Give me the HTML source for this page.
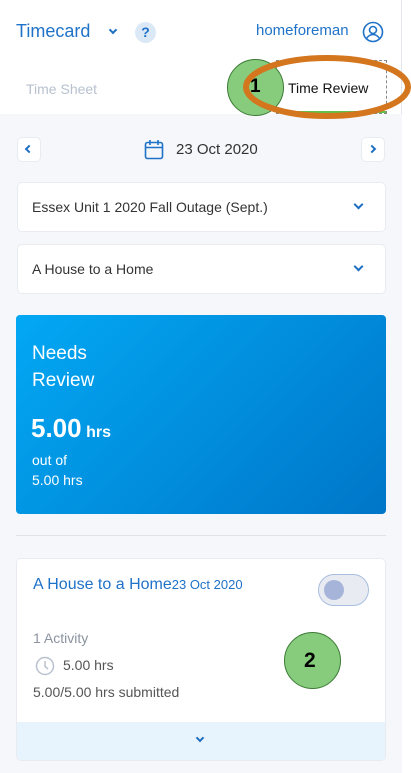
<!DOCTYPE html>
<html><head><style>
*{box-sizing:border-box;margin:0;padding:0}
body{width:411px;height:773px;overflow:hidden;background:#fff;font-family:"Liberation Sans",sans-serif;position:relative}
.abs{position:absolute}
.main{position:absolute;left:0;top:0;width:402px;height:773px;border-right:1px solid #e3e6ea}
.gray{position:absolute;left:0;top:114px;width:402px;height:659px;background:#f5f7fb}
.box{position:absolute;background:#fff;border:1px solid #e8ebf0;border-radius:5px}
.chev{position:absolute;width:7px;height:7px;border-right:2px solid #1d6fc4;border-bottom:2px solid #1d6fc4;transform:rotate(45deg)}
</style></head><body>
<div class="main"></div>
<div class="gray"></div>
<div class="abs" style="left:16px;top:21px;font-size:18px;color:#1f72c8">Timecard</div>
<div class="chev" style="left:110px;top:27px;width:6px;height:6px"></div>
<div class="abs" style="left:135px;top:22px;width:21px;height:21px;border-radius:50%;background:#dbe9f7;color:#1f72c8;font-size:14px;font-weight:bold;text-align:center;line-height:21px">?</div>
<div class="abs" style="left:256px;top:22px;font-size:15px;color:#1f72c8">homeforeman</div>
<svg class="abs" style="left:362px;top:21px" width="22" height="22" viewBox="0 0 22 22"><circle cx="11" cy="11" r="9.5" fill="none" stroke="#1f72c8" stroke-width="1.6"/><circle cx="11" cy="9" r="3.5" fill="none" stroke="#1f72c8" stroke-width="1.6"/><path d="M4.5 17.5c2-3 4-4 6.5-4s4.5 1 6.5 4" fill="none" stroke="#1f72c8" stroke-width="1.6"/></svg>
<div class="abs" style="left:26px;top:81px;font-size:14px;color:#b7c1cf">Time Sheet</div>
<div class="abs" style="left:276px;top:60px;width:111px;height:54px;border:1px dashed #888"></div>
<div class="abs" style="left:277px;top:111px;width:109px;height:2px;background:#5fc04a"></div>
<div class="abs" style="left:227px;top:59px;width:57px;height:57px;border-radius:50%;background:#86cc7c;border:1.5px solid #3c7a35"></div>
<div class="abs" style="left:250px;top:76px;font-size:19px;font-weight:bold;color:#000">1</div>
<svg class="abs" style="left:240px;top:52px" width="171" height="70"><ellipse cx="87" cy="35" rx="81" ry="29" fill="none" stroke="#d4761e" stroke-width="6"/></svg>
<div class="abs" style="left:288px;top:80px;font-size:14px;color:#111">Time Review</div>
<div class="box" style="left:17px;top:137px;width:24px;height:25px"></div>
<div class="chev" style="left:26px;top:146px;transform:rotate(135deg);width:6px;height:6px"></div>
<div class="box" style="left:361px;top:137px;width:24px;height:25px"></div>
<div class="chev" style="left:369px;top:146px;transform:rotate(-45deg);width:6px;height:6px"></div>
<svg class="abs" style="left:144px;top:139px" width="20" height="22" viewBox="0 0 20 22"><rect x="1.5" y="3.5" width="17" height="16" rx="2" fill="none" stroke="#1f72c8" stroke-width="1.6"/><path d="M1.5 8.5h17M6 1v5M14 1v5" stroke="#1f72c8" stroke-width="1.6"/></svg>
<div class="abs" style="left:176px;top:141px;font-size:15px;color:#333">23 Oct 2020</div>
<div class="box" style="left:17px;top:182px;width:369px;height:50px"></div>
<div class="abs" style="left:32px;top:199px;font-size:14px;color:#333">Essex Unit 1 2020 Fall Outage (Sept.)</div>
<div class="chev" style="left:355px;top:201px"></div>
<div class="box" style="left:17px;top:244px;width:369px;height:50px"></div>
<div class="abs" style="left:32px;top:261px;font-size:14px;color:#333">A House to a Home</div>
<div class="chev" style="left:355px;top:263px"></div>
<div class="abs" style="left:16px;top:315px;width:370px;height:199px;border-radius:4px;background:linear-gradient(135deg,#02a8f4,#0076c8)"></div>
<div class="abs" style="left:32px;top:340px;font-size:19px;color:#fff;line-height:27px">Needs<br>Review</div>
<div class="abs" style="left:31px;top:413px;color:#fff"><span style="font-size:26px;font-weight:bold">5.00</span> <span style="font-size:16px;font-weight:bold">hrs</span></div>
<div class="abs" style="left:32px;top:450px;font-size:14px;color:#fff;line-height:20px">out of<br>5.00 hrs</div>
<div class="abs" style="left:16px;top:535px;width:370px;height:1px;background:#dfe2e7"></div>
<div class="box" style="left:16px;top:558px;width:370px;height:203px;overflow:hidden"><div style="position:absolute;left:0;bottom:0;width:100%;height:38px;background:#e8f4fd"></div></div>
<div class="abs" style="left:33px;top:576px;color:#1f72c8"><span style="font-size:16px">A House to a Home</span><span style="font-size:13px">23 Oct 2020</span></div>
<div class="abs" style="left:318px;top:574px;width:51px;height:32px;border-radius:16px;background:#e8ecf2;border:1.5px solid #a9bde0"></div>
<div class="abs" style="left:324px;top:580px;width:20px;height:20px;border-radius:50%;background:#a5b4d8"></div>
<div class="abs" style="left:33px;top:630px;font-size:14px;color:#8b93a0">1 Activity</div>
<svg class="abs" style="left:35px;top:656px" width="20" height="20"><circle cx="10" cy="10" r="8.5" fill="none" stroke="#b9c2ce" stroke-width="1.5"/><path d="M10 5v5.5l3 2.5" fill="none" stroke="#b9c2ce" stroke-width="1.5"/></svg>
<div class="abs" style="left:63px;top:657px;font-size:14px;color:#555">5.00 hrs</div>
<div class="abs" style="left:33px;top:684px;font-size:14px;color:#555">5.00/5.00 hrs submitted</div>
<div class="abs" style="left:284px;top:632px;width:57px;height:57px;border-radius:50%;background:#86cc7c;border:1.5px solid #3c7a35"></div>
<div class="abs" style="left:304px;top:649px;font-size:21px;font-weight:bold;color:#000">2</div>
<div class="chev" style="left:197px;top:735px;width:6px;height:6px"></div>
</body></html>
